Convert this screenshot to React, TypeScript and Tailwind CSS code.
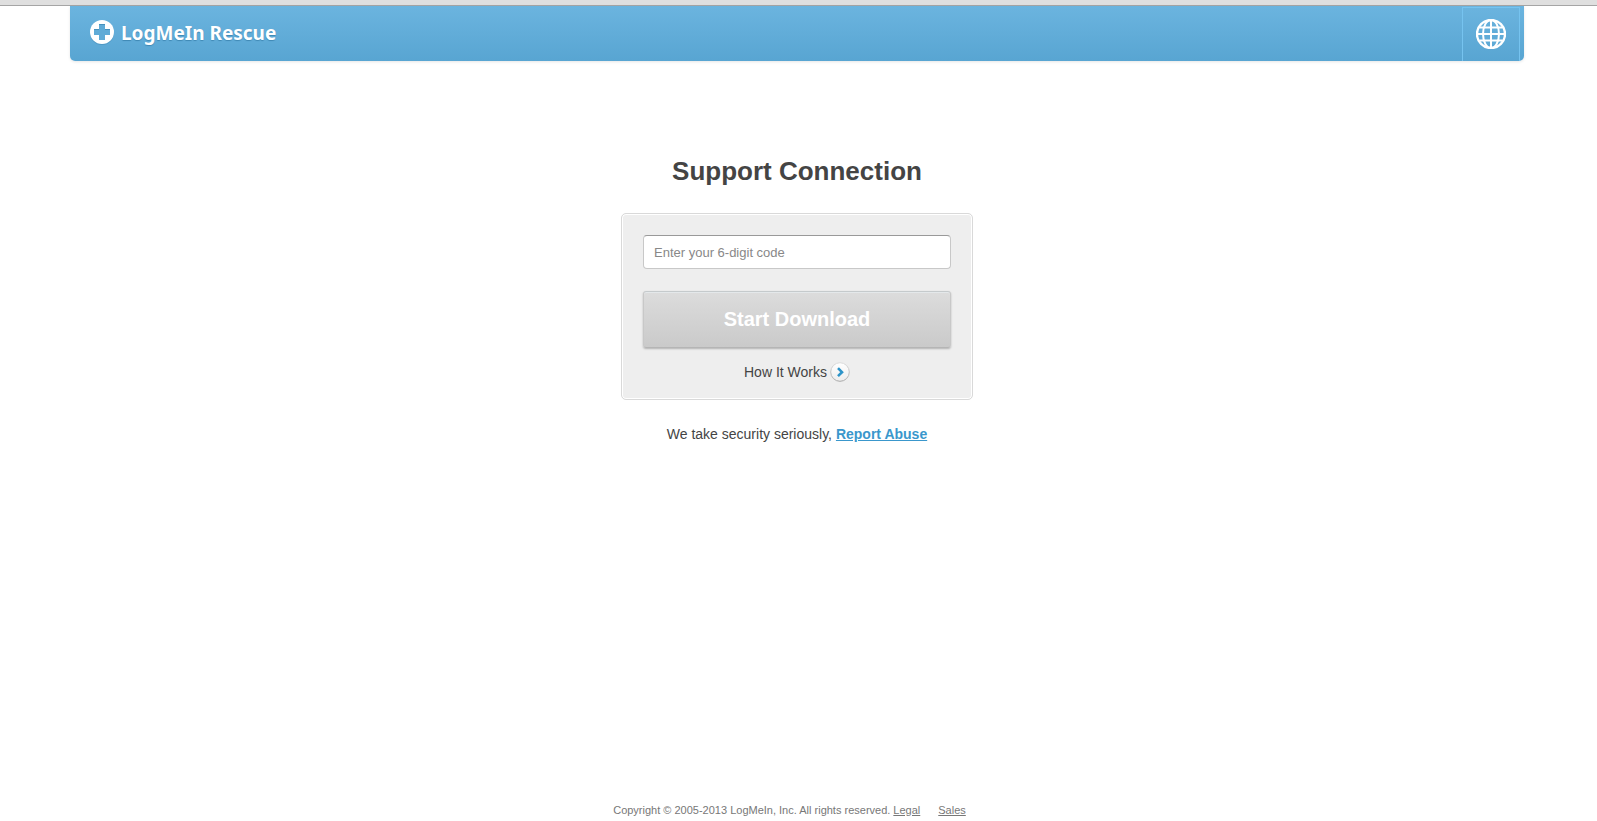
import React from 'react';

const RescueLogo = () => (
    <svg className="h-[26px] w-6 shrink-0" viewBox="0 0 24 26" aria-hidden="true">
        <circle cx="12" cy="13" r="12" fill="#3f88b4" opacity="0.5" />
        <circle cx="12" cy="12" r="12" fill="#fff" />
        <path d="M9 4h6v5h5v6h-5v5H9v-5H4V9h5z" fill="#5fabd7" />
        <path d="M9 4.500h6M4 9.500h5M15 9.500h5" stroke="#4791bd" strokeWidth="1" fill="none" />
    </svg>
);

const GlobeIcon = () => (
    <svg className="h-[30px] w-[30px]" viewBox="0 0 30 30" fill="none" stroke="#fff" strokeWidth="2" aria-hidden="true">
        <circle cx="15" cy="15" r="14" strokeWidth="2.400" />
        <ellipse cx="15" cy="15" rx="8" ry="14" />
        <path d="M15 1v28M1 15h28M3.500 8.500h23M3.500 21.500h23" />
    </svg>
);

const ArrowIcon = () => (
    <svg className="h-5 w-5" viewBox="0 0 20 20" aria-hidden="true">
        <defs>
            <linearGradient id="arrow-bg" x1="0" y1="0" x2="0" y2="1">
                <stop offset="0" stopColor="#fff" />
                <stop offset="1" stopColor="#ededed" />
            </linearGradient>
            <linearGradient id="arrow-ring" x1="0" y1="0" x2="0" y2="1">
                <stop offset="0" stopColor="#dcdcdc" />
                <stop offset="1" stopColor="#a8a8a8" />
            </linearGradient>
        </defs>
        <circle cx="10" cy="10" r="9.300" fill="url(#arrow-bg)" stroke="url(#arrow-ring)" />
        <path d="M8 6.200l4 4-4 4" fill="none" stroke="#2d93c8" strokeWidth="2.600" />
    </svg>
);

const App: React.FC = () => {
    return (
        <div className="flex min-h-screen flex-col bg-white pr-[3px] font-['Liberation_Sans',Arial,sans-serif] text-[#444]">
            <div className="-mr-[3px] h-[6px] border-b border-[#a5a5a5] bg-[#dfdfdf]" />

            <header className="mx-[70px] flex h-[55px] items-stretch justify-between rounded-b-[5px] bg-linear-to-b from-[#6bb4df] to-[#58a5d2] pr-1 shadow-[0_1px_3px_rgba(0,0,0,0.1)]">
                <a href="#" className="flex items-center gap-[7px] pb-[2px] pl-5 text-white">
                    <RescueLogo />
                    <span className="font-['Noto_Sans',sans-serif] text-[19px] leading-6 font-bold [text-shadow:0_1px_1px_#3f88b4]">
                        LogMeIn Rescue
                    </span>
                </a>
                <button
                    type="button"
                    aria-label="Language"
                    className="mt-px flex w-[58px] items-center justify-center border-x border-t border-[#76c3ef] pb-[2px]"
                >
                    <GlobeIcon />
                </button>
            </header>

            <main className="flex flex-1 flex-col items-center">
                <h1 className="mt-[94px] text-[26px] leading-8 font-bold">Support Connection</h1>

                <form
                    className="mt-[26px] flex w-[352px] flex-col items-center rounded-[5px] border border-[#d9d9d9] bg-[#eee] px-[21px] pt-[21px] pb-[17px] shadow-[inset_0_0_0_1px_#fff]"
                    onSubmit={(e) => e.preventDefault()}
                >
                    <input
                        type="text"
                        maxLength={6}
                        aria-label="Enter your 6-digit code"
                        placeholder="Enter your 6-digit code"
                        className="h-[34px] w-full rounded-[4px] border border-[#c8c8c8] border-t-[#999] bg-white px-[10px] text-[13px] outline-none placeholder:text-[#888]"
                    />
                    <button
                        type="submit"
                        className="mt-[22px] h-[57px] w-full rounded-[3px] border border-[#c8c8c8] border-t-[#c5cacc] border-b-[#b5b5b5] bg-linear-to-b from-[#dcdcdc] to-[#cacaca] pb-[2px] text-xl font-bold text-white shadow-[inset_0_1px_0_#e4e8ea,0_1px_2px_rgba(0,0,0,0.25)]"
                    >
                        Start Download
                    </button>
                    <a href="#" className="mt-[14px] flex items-center gap-[3px] text-sm">
                        How It Works
                        <ArrowIcon />
                    </a>
                </form>

                <p className="mt-6 text-sm">
                    We take security seriously,{' '}
                    <a href="#" className="font-bold text-[#3a97cc] underline">Report Abuse</a>
                </p>
            </main>

            <footer className="flex justify-center pb-[3px] text-[11px] leading-4 text-[#777]">
                <span>Copyright © 2005-2013 LogMeIn, Inc. All rights reserved.</span>
                <a href="#" className="mr-[18px] ml-[3px] underline">Legal</a>
                <a href="#" className="mr-[15px] underline">Sales</a>
            </footer>
        </div>
    );
};

export default App;
